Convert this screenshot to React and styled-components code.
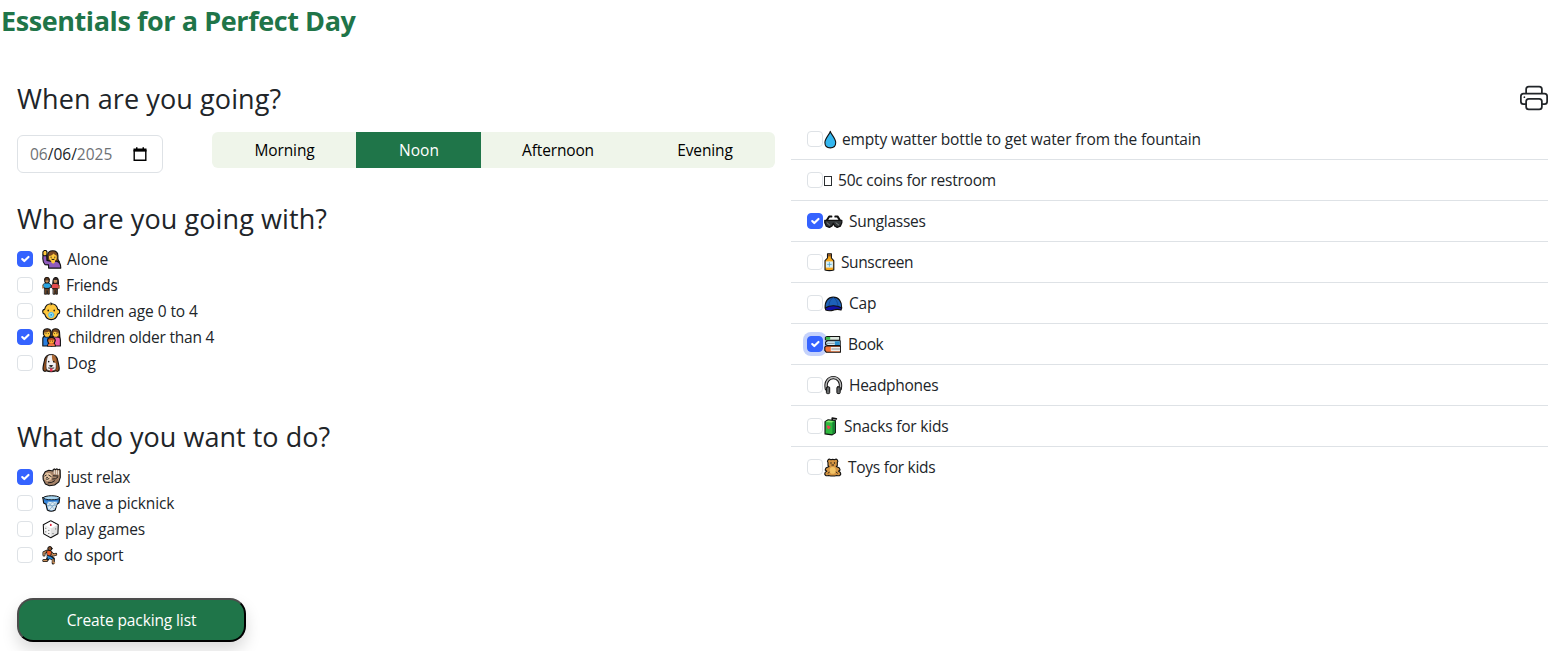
import React from "react";
import styled, { createGlobalStyle, css } from "styled-components";
import { BsPrinter } from "react-icons/bs";

const GlobalStyle = createGlobalStyle`
  *, *::before, *::after { box-sizing: border-box; }
  body {
    margin: 0;
    background: #fff;
    color: #212529;
    font-family: "Segoe UI", "Open Sans", "Noto Sans", sans-serif;
    font-size: 15.5px;
    line-height: 24px;
  }
`;

const Page = styled.div`
  height: 651px;
  overflow: hidden;
`;

const Title = styled.h1`
  margin: 0;
  padding: 4px 0 0 1px;
  height: 83px;
  font-size: 27px;
  line-height: 34px;
  font-weight: 700;
  letter-spacing: -0.42px;
  color: #1f7549;
  white-space: nowrap;
`;

const Columns = styled.main`
  display: grid;
  grid-template-columns: 775px 757px;
  column-gap: 16px;
`;

const Planner = styled.section`
  padding-left: 17px;
`;

const Heading = styled.h2`
  margin: 0;
  height: 34px;
  font-size: 27px;
  line-height: 32px;
  font-weight: 400;
  letter-spacing: ${(p) => p.$track ?? 0.1}px;
  white-space: nowrap;
`;

const Text = styled.span`
  display: inline-block;
  white-space: nowrap;
  letter-spacing: ${(p) => p.$track || 0}px;
`;

const WhenRow = styled.div`
  display: flex;
  justify-content: space-between;
  align-items: flex-start;
  height: 86px;
  padding-top: 15px;
`;

const DateField = styled.div`
  display: flex;
  align-items: center;
  justify-content: space-between;
  width: 146px;
  height: 38px;
  margin-top: 3px;
  padding: 0 15px 0 12px;
  border: 1px solid #dee2e6;
  border-radius: 6px;
  color: #6f7275;
  b { font-weight: 400; color: #212529; }
`;

const TimeGroup = styled.div`
  display: grid;
  grid-template-columns: 144px 125px 153px 141px;
  height: 36px;
  border-radius: 6px;
  overflow: hidden;
  background: #eff5ea;
`;

const TimeOption = styled.button`
  border: 0;
  padding: 0 0 0 1px;
  font: inherit;
  color: ${(p) => (p.$active ? "#fff" : "#000")};
  background: ${(p) => (p.$active ? "#1f7549" : "transparent")};
`;

const Options = styled.div`
  padding-top: 9px;
  height: ${(p) => p.$height}px;
`;

const Option = styled.label`
  display: flex;
  align-items: center;
  height: 26px;
`;

const Box = styled.span`
  display: grid;
  place-items: center;
  flex: 0 0 16px;
  height: 16px;
  margin-right: ${(p) => p.$gap || 0}px;
  border: 1px solid #dee2e6;
  border-radius: 4px;
  ${(p) => p.$checked && css`
    background: #3563ff;
    border-color: #3563ff;
  `}
  ${(p) => p.$focused && css`
    box-shadow: 0 0 0 4px #c5d2fb;
  `}
`;

const Emoji = styled.svg`
  flex: none;
  overflow: visible;
`;

const Submit = styled.button`
  display: block;
  width: 229px;
  height: 44px;
  padding: 0;
  border: 2px solid;
  border-color: #4c4c4c #000 #000 #4c4c4c;
  border-radius: 16px;
  background: #1f7549;
  color: #fff;
  font: inherit;
  box-shadow: 0 8px 16px rgba(0, 0, 0, 0.15);
`;

const Packing = styled.section`
  display: flex;
  flex-direction: column;
`;

const PrintButton = styled.button`
  align-self: flex-end;
  display: block;
  height: 36px;
  padding: 1px 0 0;
  border: 0;
  background: none;
  color: #212529;
  line-height: 0;
  svg { display: block; margin-bottom: 7px; }
`;

const PackingItem = styled.label`
  display: flex;
  align-items: center;
  height: 41px;
  padding-left: 16px;
  border-bottom: 1px solid #dee2e6;
  &:last-child { border-bottom-color: transparent; }
`;

const skin = "#c98f5a";
const yellow = "#ffc83d";
const line = { stroke: "#111", strokeWidth: 1.1, strokeLinejoin: "round", strokeLinecap: "round" };

const art = {
  hand: (
    <g {...line}>
      <path d="M5.7 11.5V6c0-3.2 2-4.9 5-4.9 3.4 0 5.2 1.9 5.2 5v2.8c0 1.7.9 2.5 1.6 3.6H7z" fill="#7d4a22" />
      <path d="M1 5.2 3 4.6l1.6.8.3 5.4 3.6.7h6c3.2.6 4.3 2.9 4.3 7H6.6v-3.2L3 15.1C1.4 13.6.8 11.6.8 9z" fill="#8f5bbd" />
      <path d="M.9 5V2.3L2.2.9h1.9l.9 1.4v2.6l-1 1.2H1.7z" fill={yellow} />
      <path d="M9.2 10.5h3.8v2.2l-1.9 1.4-1.9-1.4z" fill={yellow} stroke="none" />
      <path d="M7 6.4c2.5-.2 3.9-1.3 4.7-2.5.8 1.2 1.8 1.9 3 2.2v2.1c0 2.2-1.6 3.5-3.8 3.5S7 10.4 7 8.2z" fill={yellow} stroke="none" />
      <path d="M9.1 7.5v.2M12.8 7.5v.2M9.8 9.7q1.2.8 2.4 0" fill="none" strokeWidth="1" />
    </g>
  ),
  friends: (
    <g {...line}>
      <path d="M2.7 3.7C2.9 1.4 7 1.4 7.2 3.7v2.1l-.9 1.8H3.8l-1-1.8z" fill="#c98f5a" />
      <path d="M2.7 3.9C2.9 1 7 1 7.2 3.9z" fill="#5b3518" strokeWidth=".7" />
      <path d="M10.9 6.8c0-6 5.2-6.3 5.4-1.7l.2 3h-5.6z" fill="#3c2923" />
      <path d="M11.8 4.4q2.2-.2 3.3 0v2L14 7.7h-1.3l-.9-1.3z" fill={skin} stroke="none" />
      <path d="M3.2 7.5h3.7L8.8 9l.4 3H7.3v1H2.6V12H.9V9.5z" fill="#2aa3df" strokeWidth=".8" />
      <path d="M11.6 7.8H15l2 1.7.2 2.6-1.7 1.2h-4.6L9.5 12V9.8z" fill="#e44c4d" strokeWidth=".8" />
      <path d="M2.8 12.8h4.5v5.8H5.5V15h-.8v3.6H2.8zM11.4 13.2h4v5.4h-1.6V15h-.6v3.6h-1.8z" fill="#6e4423" strokeWidth=".8" />
      <path d="M.8 10.4v2M17.3 10.5v2" stroke={skin} strokeWidth="1.4" />
    </g>
  ),
  baby: (
    <g {...line}>
      <path d="M9.2 2.1c-3.3 0-5.9 2.2-6.6 5.7C1.3 8 .6 8.9.7 10.2c0 1.2.8 2.1 2 2.3.9 3.4 3.2 5.5 6.5 5.5s5.6-2.1 6.5-5.5c1.2-.2 2-1.1 2-2.3.1-1.3-.6-2.2-1.9-2.4-.7-3.5-3.3-5.7-6.6-5.7z" fill={yellow} />
      <path d="M9.1 1q1.6 1.2.1 2.4" fill="none" strokeWidth=".9" />
      <path d="M6.2 8.7v.4M12.2 8.7v.4" strokeWidth="1.4" />
      <circle cx="9.2" cy="13.3" r="2.6" fill="#8fdcf5" stroke="#46b5df" strokeWidth=".8" />
      <circle cx="9.2" cy="13.3" r=".8" fill="#168fc8" stroke="none" />
    </g>
  ),
  family: (
    <g {...line}>
      <path d="M.8 18.4V11c0-1.4.7-2.2 2.4-2.5h5.2l1.4 2v7.9z" fill="#2c7fdf" />
      <path d="M9.2 18.4v-7.9l1.4-2H15c2.5.3 3.4 1.7 3.4 4v5.9z" fill="#ec5fa8" />
      <path d="M1.4 6.6V3.8C1.7 2 3.3 1.1 5.2 1.1s3.4.9 3.7 2.7v3.1L7.3 9.4H3.2z" fill="#78461f" />
      <path d="M9.8 9V4.4c.2-2.2 1.7-3.3 3.8-3.3s3.6 1.1 3.9 3.3l.4 5.3z" fill="#78461f" />
      <path d="M2.3 4.8q3 .3 4.5-1l1.2 1.4v2L6.7 9.1h-3L2.3 7.2zM11 5.4l1.8-1.6q1.8 1.4 3.6 1.6v2.2L14.9 9.2h-2.6L11 7.4z" fill={yellow} stroke="none" />
      <path d="M5.5 13c0-2 1.6-3.2 3.9-3.2s3.9 1.2 3.9 3.2l-1 2.6 1.2 2.8H5.5l1-2.8z" fill="#bd4f22" />
      <path d="M6.8 12.6H12v1.8l-1.6 1.5H8.3l-1.5-1.5z" fill="#ffa936" stroke="none" />
      <path d="M6.5 16.4h5.8l.5 2H6z" fill="#f17442" stroke="none" />
      <path d="M4 6v.1M6.4 6v.1M12.4 6v.1M14.9 6v.1M8.2 13.5v.1M10.5 13.5v.1" strokeWidth=".8" />
    </g>
  ),
  dog: (
    <g {...line}>
      <path d="M1.2 16.4c-.8-2 .5-5.3 1.1-9C2.9 3.3 5.3.9 9.1.9s6.2 2.4 6.8 6.5c.6 3.7 2 7 1.1 9-.4 1.4-2 1.8-3.2.7-2.4 1.4-6.9 1.4-9.3 0-1.2 1.1-2.8.7-3.3-.7z" fill="#95501f" />
      <path d="M4.5 15.8C3.5 13 4.3 4 6 2.2 7.4.8 10.8.8 12.3 2.2c1.8 1.8 2.4 10.8 1.4 13.6-1.8 1.9-7.3 1.9-9.2 0z" fill="#f4f1f2" strokeWidth=".5" />
      <path d="M10 1.5c3.6-.4 4.4 2.9 4.3 8.2-2.8 0-4.8-2.2-4.3-8.2z" fill="#ad6a35" stroke="none" />
      <path d="M6.7 7.8v.4M11.8 7.8v.4" strokeWidth="1.5" />
      <path d="M7.8 12h2.8l-1.4 1.4zM6.5 14.4q2.8.7 5.4 0" fill="#111" strokeWidth=".8" />
      <path d="M8 14.8h2.5v2.6q-1.2 1-2.5 0z" fill="#ef2f55" stroke="none" />
    </g>
  ),
  sloth: (
    <g {...line}>
      <path d="M1.2 11.8 1 8.2l2.2-4.1 3.6-1.4 4.4.7V2l1.4-.7 1 .9 1.4-1 1.2 1 1.5-.5.5 1.2.1 6.9-1.5 4.5-4.2 3.1-5.2.7-4-1.8z" fill="#a58268" />
      <path d="M1.9 8.2 4 5.2l4 .2 2.3 2.8-1.2 3.8-3.5 1.7-3.1-1.6z" fill="#e6c5a2" stroke="none" />
      <path d="M12.3 6V3M14.4 6.3V2.8M16.4 6.6V3.3" stroke="#eadccc" strokeWidth="1.2" />
      <path d="m2.8 8.4 1.4-.8M6.8 7.6 9.2 9M4.7 9.8h.8M4 11.5q1.4.7 3-.4M11.4 8.2l4.3.2M10.6 11.5q3.5.5 5.3-2M6.2 15.3q3.8.3 6.4-2.1" fill="none" strokeWidth=".9" />
    </g>
  ),
  basket: (
    <g {...line}>
      <path d="M.9 4 1.6 9.3l2.4 1.4 1.3 5.7q3.8 2.3 7.9 0l1.7-5.7 2.1-1.4.7-5.3z" fill="#3687dc" />
      <path d="M6 8.2h9.2l-.9 3.4-1.6 4.3q-3.3 1.7-6.3.3L4.9 11.4z" fill="#dceaf1" stroke="none" />
      <path d="m6.4 9 6.3 6.8M10.4 8.2l3.8 3.8M14.6 8.4l-7.3 7.8M10.8 8.2l-5 4.8M5.4 12h8.9" fill="none" stroke="#6799c0" strokeWidth=".6" />
      <path d="M.9 4.2C2.8 1.4 15.9 1.4 17.8 4.2c-.8 2.8-16 2.8-16.9 0z" fill="#a9d7f3" strokeWidth="1" />
      <path d="M2.3 6.4q6.3 1.5 13.9.1" fill="none" stroke="#1d65b4" strokeWidth=".8" />
    </g>
  ),
  die: (
    <g {...line}>
      <path d="m8.8 1.2 7.5 4-.4 9-7.1 4-7.1-4-.4-9z" fill="#e1e1e1" />
      <path d="m1.9 5.8 6.9 3.6v8.1l-6.4-3.7z" fill="#f6f6f6" stroke="none" />
      <path d="m2.4 5.4 6.4-3.4 6.5 3.4-6.5 3.4z" fill="#fff" stroke="none" />
      <path d="M8.8 5.1v.5" stroke="#e22a42" strokeWidth="1.8" />
      <path d="M3.8 8.6v.1M6.8 13.8v.1M3.8 12.2v.1M6.8 10.7v.1M11 14v.1M13.7 9.3v.1" strokeWidth="1" stroke="#444" />
    </g>
  ),
  runner: (
    <g fill="none" strokeLinecap="round" strokeLinejoin="round">
      <path d="M5.2 5.5 2 7v2.5M9.3 7.5l1.8 2 2.6-.7M8 11.2l3.4 2-.2 4.2M6 12.8 4.7 15H1.8" stroke="#111" strokeWidth="3" />
      <path d="M5.2 5.5 2 7v2.5M9.3 7.5l1.8 2 2.6-.7" stroke={skin} strokeWidth="1.6" />
      <path d="m4.8 5.7 2-1.2 3 1.5-1.4 4.8-3-1.2z" fill="#f05a24" stroke="#111" strokeWidth=".7" />
      <path d="M5.4 9.8 8.8 10.8l2.5 2-.8 1.5-3-1.1-2 .6z" fill="#268fe0" stroke="#111" strokeWidth=".7" />
      <path d="m11 14.2.1 3h1.4M4.7 15H1.8" stroke={skin} strokeWidth="1.5" />
      <circle cx="7.9" cy="3" r="2.1" fill="#84502c" stroke="#111" />
    </g>
  ),
  drop: (
    <g {...line}>
      <path d="M6.3 1.7C5.8 4.5.9 8.8.9 13c0 3.2 2.2 5.3 5.4 5.3s5.4-2.1 5.4-5.3c0-4.2-4.9-8.5-5.4-11.3z" fill="#35b7ef" />
    </g>
  ),
  missing: <rect x=".5" y="5.9" width="7" height="9" fill="none" stroke="#292d30" />,
  glasses: (
    <g {...line}>
      <path d="M3 8.5 5.2 4.8 7.4 5M15.8 8.5l-2.3-3.7-2.2.2" fill="none" strokeWidth="2" />
      <path d="M.8 8.7h17v2.4l-1.5 3.5-3.1 1.2-2.6-1.5-1.3-2.6L8 14.3l-2.6 1.5-3.1-1.2L.8 11.1z" fill="#34383a" strokeWidth="1.3" />
      <path d="m3.1 11.2 2.5 2.2M12 11.2l2.7 2.2" stroke="#8c9293" strokeWidth=".9" />
    </g>
  ),
  lotion: (
    <g {...line}>
      <path d="M3.5 1.2h3.9v4.2l2.4 2.7v9.2q-4.4 1.5-8.8 0V8.1l2.5-2.7z" fill="#f6a81c" />
      <path d="M4.1 1.5H7v2.3H4.1z" fill="#855329" stroke="none" />
      <path d="M1.9 8.8h7v6.2h-7z" fill="#d9f1fb" stroke="none" />
      <path d="M5.4 9.8v4M3.5 11.8h3.8" stroke="#4da3c9" strokeWidth=".8" />
    </g>
  ),
  cap: (
    <g {...line}>
      <path d="M1.2 14.5C.6 7.7 4 3.5 9.3 3.5s8.7 4.2 8.4 11c-5-2.2-11.5-2.2-16.5 0z" fill="#1d62b9" />
      <path d="M9.3 4q-4.1 2-4.4 8M9.3 4q4.1 2 4.7 8" fill="none" stroke="#123f87" strokeWidth=".7" />
      <path d="M1.2 14.3q8.1-4.3 16.5 0l-.7 2.2q-3.4-1.4-7.4 0-4.6 1.3-7.8-.1z" fill="#1111a9" />
    </g>
  ),
  books: (
    <g {...line}>
      <path d="M3 1.9h12.7v3.8H3L1.4 5.1V2.8z" fill="#dde8df" />
      <path d="M1.8 2.4h4.4v2.8H1.8z" fill="#35b74a" stroke="none" />
      <path d="M3.6 6.2h12.6v4.7H3.6l-2-.9V7.3z" fill="#d3f0fb" />
      <path d="M10.8 6.7h4.9v3.7h-4.9z" fill="#2a91cf" stroke="none" />
      <path d="M2 11.4h14.4v6.2H2.2L.8 15.8v-3.2z" fill="#f47438" />
      <path d="M6.8 12.4H16v4.2H6.8z" fill="#eef0ed" stroke="none" />
      <path d="M2.8 8.7h7.4M7.8 14.4H16" strokeWidth=".7" stroke="#666" />
    </g>
  ),
  headphones: (
    <g fill="none" strokeLinecap="round">
      <path d="M2.4 13.3C-.8-1.8 19.4-1.8 16.2 13.3" stroke="#111" strokeWidth="3.4" />
      <path d="M2.4 13.3C-.8-1.8 19.4-1.8 16.2 13.3" stroke="#bbb" strokeWidth="1.5" />
      <rect x="2.4" y="11.2" width="3.3" height="6.8" rx="1" fill="#66696a" stroke="#111" />
      <rect x="12.9" y="11.2" width="3.3" height="6.8" rx="1" fill="#66696a" stroke="#111" />
    </g>
  ),
  juice: (
    <g {...line}>
      <path d="M8.3 4V1.6l4 .6" fill="none" strokeWidth="1.8" />
      <path d="m1 5 3.1-1.9 7.3.8v12.3l-3.2 2.1-7.2-1z" fill="#2fb83f" />
      <path d="m8.4 6.1 2.5-1.6v11.2l-2.5 1.9z" fill="#178333" stroke="none" />
      <path d="m1.7 5.3 2.4-1.4 5.5.8-2 1.2z" fill="#8ee975" stroke="none" />
      <path d="M2.9 9.3q1.6-1.3 2 .3 2-.8 1.6 1-.7 1.5-2 2-1.9-1.2-1.6-3.3z" fill="#eb4252" stroke="none" />
    </g>
  ),
  teddy: (
    <g {...line}>
      <path d="M4 5C2.5 2.8 4.8.6 6.6 2.1q2.2-.6 4.2 0c1.7-1.5 4.1.7 2.5 2.9v2.8l-1 1.2 3.1 1.5.7 1.9-1.6 1.2q2.4.8 2.3 2.8-.8 2.6-4 1.4-4 1.3-8.1 0-3.2 1.2-4-1.4 0-2.1 2.1-2.8l-1.6-1.2.7-1.9 3.1-1.5-1-1.2z" fill="#d59542" />
      <ellipse cx="8.7" cy="12.8" rx="3" ry="3.4" fill="#f2c366" stroke="none" />
      <path d="M7 5.2v.2M10.5 5.2v.2" strokeWidth="1.3" />
      <path d="M7.9 7.4h1.7M5.2 14.5l-.9 1.1M12.4 14.5l.9 1.1" fill="none" strokeWidth=".9" />
    </g>
  ),
};

const CheckBox = ({ checked, focused, gap }) => (
  <Box role="checkbox" aria-checked={!!checked} $checked={checked} $focused={focused} $gap={gap}>
    {checked && (
      <svg width="14" height="14" viewBox="0 0 20 20" fill="none" stroke="#fff" strokeWidth="3" strokeLinecap="round" strokeLinejoin="round">
        <path d="m6 10 3 3 6-6" />
      </svg>
    )}
  </Box>
);

const Picture = ({ name, width }) => (
  <Emoji width={width} height="20" viewBox={`0 -0.6 ${width} 20`} aria-hidden="true">{art[name]}</Emoji>
);

const company = [
  { icon: "hand", slot: 25, label: "Alone", checked: true },
  { icon: "friends", slot: 24, track: -0.3, label: "Friends" },
  { icon: "baby", slot: 24, track: -0.07, label: "children age 0 to 4" },
  { icon: "family", slot: 26, track: -0.21, label: "children older than 4", checked: true },
  { icon: "dog", slot: 25, label: "Dog" },
];

const activities = [
  { icon: "sloth", slot: 25, track: -0.3, label: "just relax", checked: true },
  { icon: "basket", slot: 25, track: -0.12, label: "have a picknick" },
  { icon: "die", slot: 23, track: -0.12, label: "play games" },
  { icon: "runner", slot: 22, track: -0.2, label: "do sport" },
];

const packing = [
  { icon: "drop", slot: 18, track: -0.14, label: "empty watter bottle to get water from the fountain" },
  { icon: "missing", slot: 14, track: -0.23, label: "50c coins for restroom" },
  { icon: "glasses", slot: 25, track: -0.28, label: "Sunglasses", checked: true },
  { icon: "lotion", slot: 17, track: -0.38, label: "Sunscreen" },
  { icon: "cap", slot: 25, track: -0.2, label: "Cap" },
  { icon: "books", slot: 24, track: -0.35, label: "Book", checked: true, focused: true },
  { icon: "headphones", slot: 25, track: -0.28, label: "Headphones" },
  { icon: "juice", slot: 20, track: -0.2, label: "Snacks for kids" },
  { icon: "teddy", slot: 24, track: -0.27, label: "Toys for kids" },
];

const times = [
  { label: "Morning", track: -0.1 },
  { label: "Noon", active: true },
  { label: "Afternoon", track: -0.15 },
  { label: "Evening", track: -0.15 },
];

const OptionList = ({ items, height }) => (
  <Options $height={height}>
    {items.map((item) => (
      <Option key={item.label}>
        <CheckBox checked={item.checked} gap={9} />
        <Picture name={item.icon} width={item.slot} />
        <Text $track={item.track}>{item.label}</Text>
      </Option>
    ))}
  </Options>
);

export default function App() {
  return (
    <Page>
      <GlobalStyle />
      <Title>Essentials for a Perfect Day</Title>
      <Columns>
        <Planner>
          <Heading>When are you going?</Heading>
          <WhenRow>
            <DateField>
              <Text>06<b>/06/</b>2025</Text>
              <svg width="14" height="15" viewBox="0 0 14 15" fill="none" stroke="#000">
                <path d="M1.2 3.5h11.6v9.8H1.2z" strokeWidth="1.4" />
                <path d="M.5 1.5h13v3H.5zM3 .2h1.5V3H3zM9.5.2H11V3H9.5z" fill="#000" stroke="none" />
              </svg>
            </DateField>
            <TimeGroup>
              {times.map((t) => (
                <TimeOption key={t.label} $active={t.active}><Text $track={t.track}>{t.label}</Text></TimeOption>
              ))}
            </TimeGroup>
          </WhenRow>
          <Heading>Who are you going with?</Heading>
          <OptionList items={company} height={184} />
          <Heading $track={0.02}>What do you want to do?</Heading>
          <OptionList items={activities} height={143} />
          <Submit><Text $track={-0.12}>Create packing list</Text></Submit>
        </Planner>
        <Packing>
          <PrintButton aria-label="Print"><BsPrinter size={28} /></PrintButton>
          {packing.map((item) => (
            <PackingItem key={item.label}>
              <CheckBox checked={item.checked} focused={item.focused} gap={1} />
              <Picture name={item.icon} width={item.slot} />
              <Text $track={item.track}>{item.label}</Text>
            </PackingItem>
          ))}
        </Packing>
      </Columns>
    </Page>
  );
}
